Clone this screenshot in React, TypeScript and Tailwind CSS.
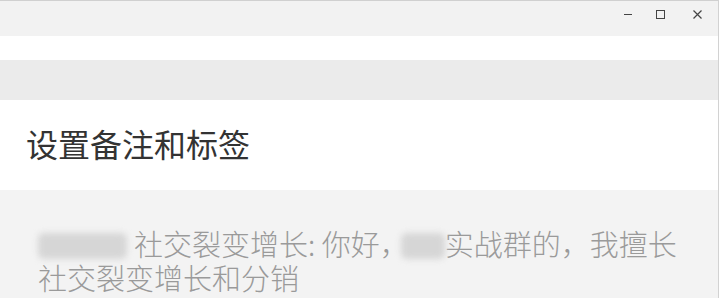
import React from "react";

const cjk = { fontFamily: '"Noto Sans CJK SC", "Noto Sans", sans-serif' };

function Blur({ w, className = "" }: { w: number; className?: string }) {
  return (
    <span
      className={"inline-block align-middle relative h-[26px] " + className}
      style={{ width: w }}
    >
      <span className="absolute inset-0 rounded-[6px] bg-[#d6d6d6] blur-[3px]" />
    </span>
  );
}

export default function App() {
  return (
    <div className="w-[721px] h-[298px] bg-white overflow-hidden flex" style={cjk}>
      <div className="w-[719px] h-full flex flex-col border-r border-[#d2d2d2]">
        {/* title bar */}
        <div className="h-[36px] bg-[#f2f2f2] border-t border-[#d0d0d0] flex items-start justify-end">
          <div className="flex items-start pt-[8px]">
            <div className="w-[32px] flex justify-center pt-[5px]">
              <div className="w-[8px] h-[1px] bg-[#444]" />
            </div>
            <div className="w-[32px] flex justify-center pt-[1px]">
              <div className="w-[9px] h-[9px] border border-[#444]" />
            </div>
            <div className="w-[42px] flex justify-center pt-[1px]">
              <svg width="9" height="9" viewBox="0 0 9 9">
                <path d="M0.5 0.5 L8.5 8.5 M8.5 0.5 L0.5 8.5" stroke="#444" strokeWidth="1.2" />
              </svg>
            </div>
          </div>
        </div>
        <div className="h-[24px] bg-white" />
        <div className="h-[40px] bg-[#ebebeb]" />
        {/* title */}
        <div className="h-[90px] bg-white flex items-center pl-[26px] pb-[4px]">
          <span className="text-[32px] leading-none text-[#333]">设置备注和标签</span>
        </div>
        {/* body */}
        <div className="flex-1 bg-[#f3f3f3] pt-[36px] pl-[38px] pr-[20px]">
          <div className="text-[29px] font-light leading-[34px] text-[#9a9a9a] whitespace-nowrap">
            <Blur w={89} className="mr-[7px] -mt-[4px]" />
            <span>社交裂变增长: 你好，</span>
            <Blur w={44} className="-ml-[8px] -mt-[4px]" />
            <span>实战群的，我擅长</span>
            <br />
            <span>社交裂变增长和分销</span>
          </div>
        </div>
      </div>
      <div className="w-[1px] h-full bg-white" />
    </div>
  );
}
